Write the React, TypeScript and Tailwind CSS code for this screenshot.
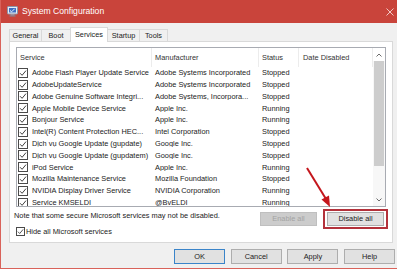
import React from "react";

const rows: [string, string, string][] = [
  ["Adobe Flash Player Update Service", "Adobe Systems Incorporated", "Stopped"],
  ["AdobeUpdateService", "Adobe Systems Incorporated", "Stopped"],
  ["Adobe Genuine Software Integri...", "Adobe Systems, Incorpora...", "Stopped"],
  ["Apple Mobile Device Service", "Apple Inc.", "Running"],
  ["Bonjour Service", "Apple Inc.", "Running"],
  ["Intel(R) Content Protection HEC...", "Intel Corporation", "Stopped"],
  ["Dịch vụ Google Update (gupdate)", "Google Inc.", "Stopped"],
  ["Dịch vụ Google Update (gupdatem)", "Google Inc.", "Stopped"],
  ["iPod Service", "Apple Inc.", "Running"],
  ["Mozilla Maintenance Service", "Mozilla Foundation", "Stopped"],
  ["NVIDIA Display Driver Service", "NVIDIA Corporation", "Running"],
  ["Service KMSELDI", "@BvELDI", "Running"],
];

function Check({ size = 10 }: { size?: number }) {
  return (
    <div
      className="shrink-0 border border-[#4a4a4a] bg-white flex items-center justify-center"
      style={{ width: size, height: size }}
    >
      <svg width={size - 2} height={size - 2} viewBox="0 0 8 8">
        <path d="M1 4.2 L3.1 6.3 L7 1.6" fill="none" stroke="#2a2a2a" strokeWidth="0.9" />
      </svg>
    </div>
  );
}

function Btn({ label, cls }: { label: string; cls: string }) {
  return (
    <div className={"flex items-center justify-center text-[7.4px] leading-none " + cls}>{label}</div>
  );
}

export default function App() {
  return (
    <div
      className="w-[397px] h-[270px] bg-white overflow-hidden relative text-[#222222]"
      style={{ fontFamily: '"Liberation Sans", Arial, sans-serif' }}
    >
      <div className="h-[269px] border-l border-b border-[#d9625a] bg-[#f0f0f0] flex flex-col">
        {/* Title bar */}
        <div className="h-[23px] bg-[#c9443b] flex items-center shrink-0">
          <div className="ml-[6px] w-[11px] h-[11px] flex items-center justify-center">
            <svg width="11" height="11" viewBox="0 0 11 11">
              <rect x="0.5" y="0.5" width="10" height="7.5" rx="0.8" fill="#e8eef6" stroke="#8a94a8" />
              <rect x="2" y="2" width="7" height="4.5" fill="#3d6fc4" />
              <path d="M3 4.5 L4.6 5.8 L7.6 2.8" fill="none" stroke="#ffffff" strokeWidth="0.9" />
              <rect x="3.5" y="8.3" width="4" height="1.2" fill="#9aa3b5" />
              <rect x="2.5" y="9.5" width="6" height="1" fill="#7f889a" />
            </svg>
          </div>
          <div className="ml-[4px] text-white text-[8.6px] leading-none">System Configuration</div>
          <div className="flex-1" />
          <svg width="8" height="8" viewBox="0 0 8 8" className="mr-[3px]">
            <path d="M0.5 0.5 L7.5 7.5 M7.5 0.5 L0.5 7.5" stroke="#f4d8d5" strokeWidth="0.9" />
          </svg>
        </div>

        {/* Tabs */}
        <div className="h-[18px] shrink-0 flex items-end pl-[8px] text-[7.3px] leading-none">
          <div className="w-[32px] h-[12px] border-l border-t border-[#d9d9d9] flex items-center justify-center">General</div>
          <div className="w-[29px] h-[12px] border-l border-t border-[#d9d9d9] flex items-center justify-center">Boot</div>
          <div className="w-[38px] h-[15px] -mb-[1px] relative z-10 bg-white border-l border-t border-r border-[#d9d9d9] flex items-center justify-center pb-[1px]">Services</div>
          <div className="w-[32px] h-[12px] border-t border-r border-[#d9d9d9] flex items-center justify-center">Startup</div>
          <div className="w-[28px] h-[12px] border-t border-r border-[#d9d9d9] flex items-center justify-center">Tools</div>
        </div>

        {/* Panel */}
        <div className="ml-[8px] w-[384px] h-[202px] shrink-0 bg-white border border-[#d9d9d9] flex flex-col">
          {/* List box */}
          <div className="ml-[6px] mt-[5px] w-[370px] h-[160px] border border-[#a8abb2] flex overflow-hidden text-[7.4px] leading-none">
            <div className="flex-1 flex flex-col overflow-hidden">
              <div className="h-[19px] shrink-0 flex text-[#333333]">
                <div className="w-[135px] pl-[3px] flex items-center border-r border-[#ececec]">Service</div>
                <div className="w-[107px] pl-[3px] flex items-center border-r border-[#ececec]">Manufacturer</div>
                <div className="w-[40px] pl-[3px] flex items-center border-r border-[#ececec]">Status</div>
                <div className="flex-1 pl-[4px] flex items-center border-r border-[#ececec]">Date Disabled</div>
              </div>
              {rows.map(([s, m, st]) => (
                <div key={s} className="h-[11.8px] shrink-0 flex items-center">
                  <div className="w-[135px] pl-[0.5px] flex items-center overflow-hidden whitespace-nowrap">
                    <Check />
                    <span className="ml-[4.4px]">{s}</span>
                  </div>
                  <div className="w-[107px] pl-[3px] whitespace-nowrap overflow-hidden">{m}</div>
                  <div className="w-[40px] pl-[3px] whitespace-nowrap">{st}</div>
                  <div className="flex-1" />
                </div>
              ))}
            </div>
            {/* Scrollbar */}
            <div className="w-[12px] shrink-0 bg-[#f7f7f7] flex flex-col items-center">
              <div className="h-[13px] w-full flex items-center justify-center bg-white">
                <svg width="6" height="4" viewBox="0 0 6 4">
                  <path d="M0.5 3.5 L3 1 L5.5 3.5" fill="none" stroke="#5a5a5a" strokeWidth="0.9" />
                </svg>
              </div>
              <div className="w-[10px] h-[105px] bg-[#cdcdcd]" />
              <div className="flex-1" />
              <div className="h-[13px] w-full flex items-center justify-center">
                <svg width="6" height="4" viewBox="0 0 6 4">
                  <path d="M0.5 0.5 L3 3 L5.5 0.5" fill="none" stroke="#5a5a5a" strokeWidth="0.9" />
                </svg>
              </div>
            </div>
          </div>

          {/* Note + buttons */}
          <div className="mt-[2px] flex items-start">
            <div className="pl-[4px] flex flex-col text-[7.4px] leading-none">
              <div className="mt-[2px] h-[9px] flex items-center whitespace-nowrap">
                Note that some secure Microsoft services may not be disabled.
              </div>
              <div className="mt-[7px] ml-[2px] flex items-center">
                <Check size={9} />
                <span className="ml-[1px]">Hide all Microsoft services</span>
              </div>
            </div>
            <div className="flex-1" />
            <Btn label="Enable all" cls="mt-[3px] w-[57px] h-[14px] bg-[#cccccc] border border-[#bfbfbf] text-[#a3a3a3]" />
            <div className="ml-[6px] mr-[4px] w-[65px] h-[20px] border-2 border-[#b3313a] flex items-center justify-center">
              <Btn label="Disable all" cls="w-[57px] h-[14px] bg-[#e1e1e1] border border-[#adadad]" />
            </div>
          </div>
        </div>

        {/* Bottom buttons */}
        <div className="mt-[6px] pl-[173px] flex gap-[5.7px]">
          <Btn label="OK" cls="w-[51px] h-[15px] bg-[#e1e1e1] border border-[#3a84c9]" />
          <Btn label="Cancel" cls="w-[51px] h-[15px] bg-[#e1e1e1] border border-[#adadad]" />
          <Btn label="Apply" cls="w-[51px] h-[15px] bg-[#e1e1e1] border border-[#adadad]" />
          <Btn label="Help" cls="w-[51px] h-[15px] bg-[#e1e1e1] border border-[#adadad]" />
        </div>
      </div>

      {/* Red annotation arrow */}
      <svg className="absolute left-0 top-0 pointer-events-none" width="397" height="270" viewBox="0 0 397 270">
        <line x1="307" y1="168" x2="326" y2="199" stroke="#c4161c" strokeWidth="2" />
        <polygon points="330,207 321.5,199.5 329,195.5" fill="#c4161c" />
      </svg>
    </div>
  );
}
